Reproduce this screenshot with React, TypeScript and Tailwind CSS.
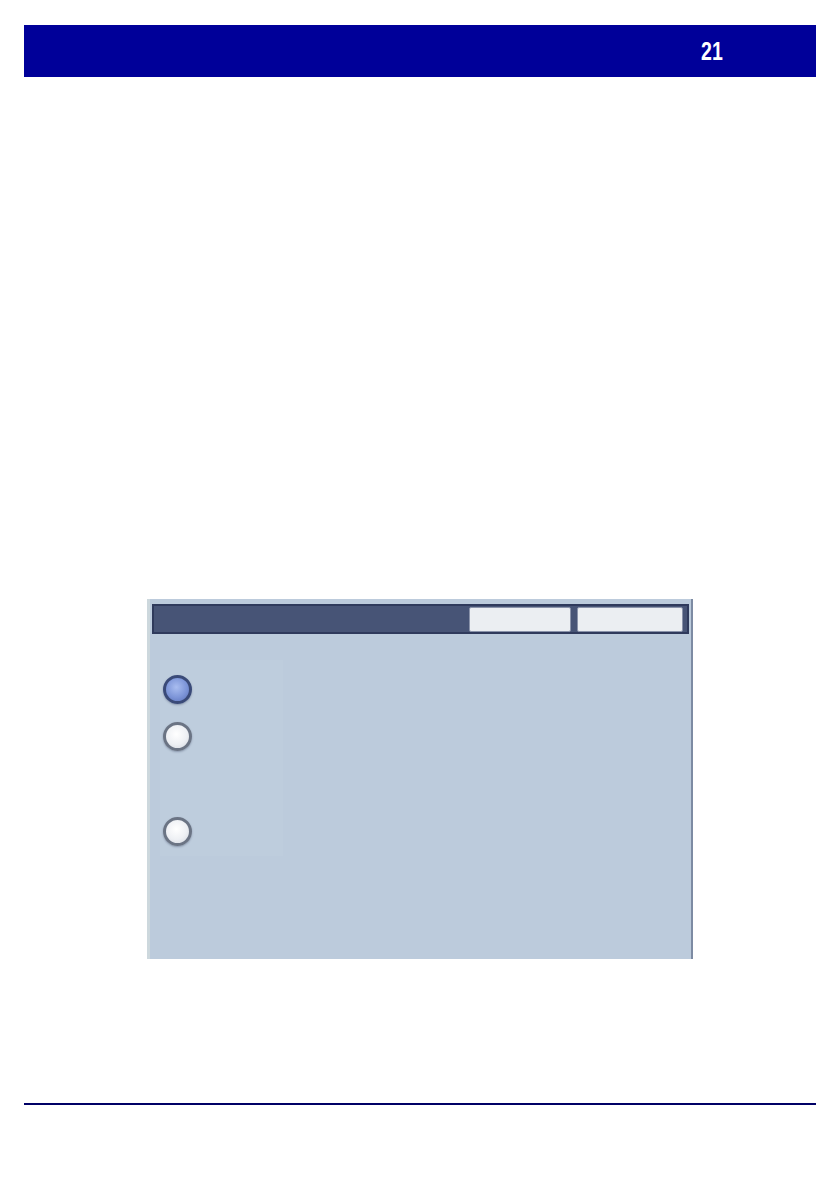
const Radio = ({ selected }: { selected?: boolean }) => (
  <div
    className={
      selected
        ? "h-[29px] w-[29px] rounded-full border-[3px] border-[#3a4a78] bg-[radial-gradient(circle_at_45%_40%,#a9bdf0,#7d95d8_55%,#5a70b8)] shadow-[0_1px_2px_rgba(60,70,100,0.4)]"
        : "h-[29px] w-[29px] rounded-full border-[3px] border-[#6b7484] bg-[radial-gradient(circle_at_45%_40%,#ffffff,#eef0f4_55%,#cfd4dc)] shadow-[0_1px_2px_rgba(60,70,100,0.4)]"
    }
  />
);

const App = () => {
  return (
    <div className="h-[1190px] w-[840px] bg-white px-6 pt-[25px] font-['Liberation_Sans',Arial,sans-serif]">
      <div className="flex h-[52px] items-center justify-end bg-[#000099] pr-[93px]">
        <span className="inline-block origin-right scale-x-[0.78] text-[25px] font-bold leading-none text-white">
          21
        </span>
      </div>

      <div className="mt-[522px] ml-[123px] flex h-[360px] w-[546px] border-l-[3px] border-r-2 border-l-[#cdd8dd] border-r-[#7d8ba3] bg-[#bccbdc]">
        <div className="flex w-full flex-col">
          <div className="mx-[2px] mt-[5px] flex h-[30px] items-center justify-end gap-[6px] border-2 border-[#2f3a5c] bg-[#475476] pr-[4px]">
            <div className="h-[25px] w-[102px] rounded-[2px] border border-[#8a93aa] bg-[#ebeef2]" />
            <div className="h-[25px] w-[106px] rounded-[2px] border border-[#8a93aa] bg-[#ebeef2]" />
          </div>

          <div className="mt-[26px] ml-[10px] flex h-[196px] w-[123px] flex-col bg-[#becddd] pl-[3px] pt-[15px]">
            <Radio selected />
            <div className="mt-[18px]">
              <Radio />
            </div>
            <div className="mt-[66px]">
              <Radio />
            </div>
          </div>
        </div>
      </div>

      <div className="mt-[144px] h-[2px] bg-[#000066]" />
    </div>
  );
};

export default App;
